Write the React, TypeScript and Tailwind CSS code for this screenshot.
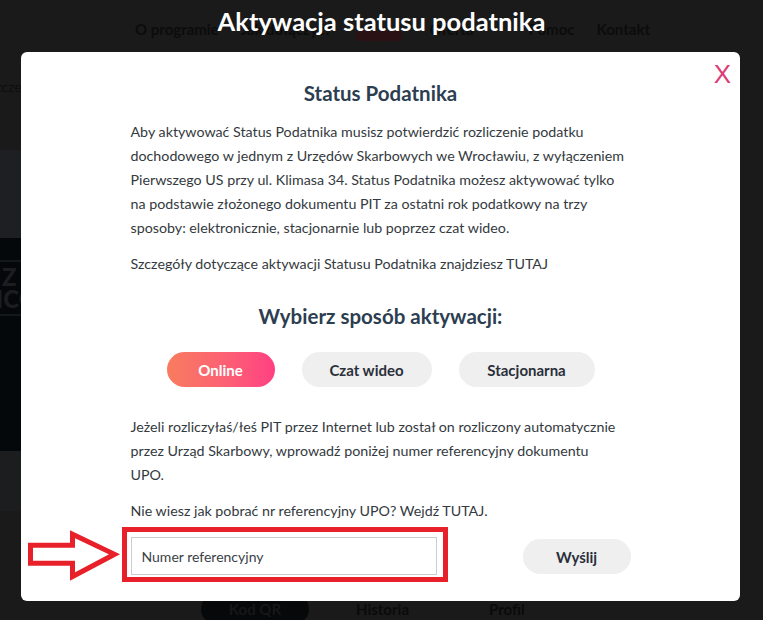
import React from "react";

export default function App() {
  const font = { fontFamily: "Lato, 'Noto Sans', sans-serif" };
  return (
    <div
      className="relative w-[763px] h-[620px] overflow-hidden bg-[#1a1a1a]"
      style={font}
    >
      {/* dimmed page behind the overlay */}
      <div className="flex flex-col h-full">
        <div className="h-[56px] flex items-center pl-[135px] pt-[2px] text-[15px] font-bold text-[#0c0c0c]">
          <span>O programie</span>
          <span className="ml-[22px]">Jak dołączyć?</span>
          <span className="ml-[24px] w-[46px] h-[10px] mt-[14px] bg-[#2a1114] rounded-sm" />
          <span className="ml-[28px]">Oferta</span>
          <span className="ml-[55px]">Pomoc</span>
          <span className="ml-[22px]">Kontakt</span>
        </div>
        <div className="h-[60px] pt-[20px] -ml-[12px] text-[14px] text-[#0e0e0e]">
          Szczegóły
        </div>
        <div className="mt-[34px] h-[88px] w-[200px] rounded-tr-[60px] bg-[#1d1f22]" />
        <div className="h-[213px] w-[200px] bg-[#05080b] flex flex-col pt-[22px]">
          <div className="h-[2px] w-full bg-[#15181b]" />
          <div className="text-[24px] font-black leading-[22px] text-[#1b1d20] pl-[2px] pt-[4px]">Z</div>
          <div className="text-[24px] font-black leading-[22px] text-[#1b1d20] -ml-[4px]">ICC</div>
          <div className="h-[2px] w-full bg-[#15181b] mt-[4px]" />
        </div>
        <div className="h-[60px] w-[200px] rounded-br-[80px] bg-[#1c1d1f]" />
        <div className="flex-1" />
        <div className="h-[22px] flex items-start text-[15px] font-bold text-[#0a0a0a]">
          <div className="ml-[201px] w-[108px] h-[30px] -mt-[4px] rounded-full bg-[#06080a] text-[#171717] flex items-center justify-center">
            Kod QR
          </div>
          <span className="ml-[47px]">Historia</span>
          <span className="ml-[80px]">Profil</span>
        </div>
      </div>

      {/* overlay with modal */}
      <div className="absolute inset-0 flex flex-col">
        <div className="h-[52px] flex items-center justify-center pb-[8px]">
          <h1 className="text-[25.5px] font-bold text-white leading-none">
            Aktywacja statusu podatnika
          </h1>
        </div>
        <div className="relative ml-[21px] w-[719px] h-[549px] rounded-md bg-white pt-[27px]">
          <button
            className="absolute top-[9px] right-[9px] text-[26px] leading-[26px] text-[#dc3d78]"
            style={{ fontFamily: "'Liberation Sans', Arial, sans-serif" }}
          >
            X
          </button>
          <div className="w-[500px] mx-auto text-[14.25px] leading-[24px] text-[#343a40]">
            <h2 className="text-[20.5px] leading-[28px] font-bold text-center text-[#2c3e50]">
              Status Podatnika
            </h2>
            <p className="mt-[13px] whitespace-nowrap">
              Aby aktywować Status Podatnika musisz potwierdzić rozliczenie podatku
              <br />
              dochodowego w jednym z Urzędów Skarbowych we Wrocławiu, z wyłączeniem
              <br />
              Pierwszego US przy ul. Klimasa 34. Status Podatnika możesz aktywować tylko
              <br />
              na podstawie złożonego dokumentu PIT za ostatni rok podatkowy na trzy
              <br />
              sposoby: elektronicznie, stacjonarnie lub poprzez czat wideo.
            </p>
            <p className="mt-[12px] whitespace-nowrap">
              Szczegóły dotyczące aktywacji Statusu Podatnika znajdziesz TUTAJ
            </p>
            <h3 className="mt-[25px] text-[20.5px] leading-[30px] font-bold text-center text-[#2c3e50]">
              Wybierz sposób aktywacji:
            </h3>
            <div className="mt-[21px] flex justify-center gap-[27px] text-[15px] font-bold">
              <button className="w-[108px] h-[35px] rounded-full bg-gradient-to-r from-[#f87c5e] to-[#ff3f82] text-white">
                Online
              </button>
              <button className="w-[130px] h-[35px] rounded-full bg-[#efefef] text-[#2b2f3a]">
                Czat wideo
              </button>
              <button className="w-[136px] h-[35px] rounded-full bg-[#efefef] text-[#2b2f3a]">
                Stacjonarna
              </button>
            </div>
            <p className="mt-[28px] whitespace-nowrap">
              Jeżeli rozliczyłaś/łeś PIT przez Internet lub został on rozliczony automatycznie
              <br />
              przez Urząd Skarbowy, wprowadź poniżej numer referencyjny dokumentu
              <br />
              UPO.
            </p>
            <p className="mt-[12px] whitespace-nowrap">
              Nie wiesz jak pobrać nr referencyjny UPO? Wejdź TUTAJ.
            </p>
            <div className="mt-[4px] flex items-center justify-between">
              <div className="-ml-[9px] border-[5px] border-[#e8202a] pl-[4px] pr-[6px] pt-[5px] pb-[2px]">
                <input
                  className="block w-[306px] h-[38px] border border-[#cccccc] pl-[10px] text-[14px] outline-none placeholder:text-[#3a3f47]"
                  style={font}
                  placeholder="Numer referencyjny"
                />
              </div>
              <button className="mt-[4px] w-[108px] h-[35px] rounded-full bg-[#efefef] text-[15px] font-bold text-[#2b2f3a]">
                Wyślij
              </button>
            </div>
          </div>
        </div>
      </div>

      {/* red annotation arrow */}
      <svg
        className="absolute left-0 top-0 pointer-events-none"
        width="763"
        height="620"
        viewBox="0 0 763 620"
      >
        <polygon
          points="30.5,545.2 72.5,545.2 72.5,534.2 114.5,554.3 72.5,576.5 72.5,563.2 30.5,563.2"
          fill="none"
          stroke="#e8202a"
          strokeWidth="5"
          strokeLinejoin="miter"
        />
      </svg>
    </div>
  );
}
